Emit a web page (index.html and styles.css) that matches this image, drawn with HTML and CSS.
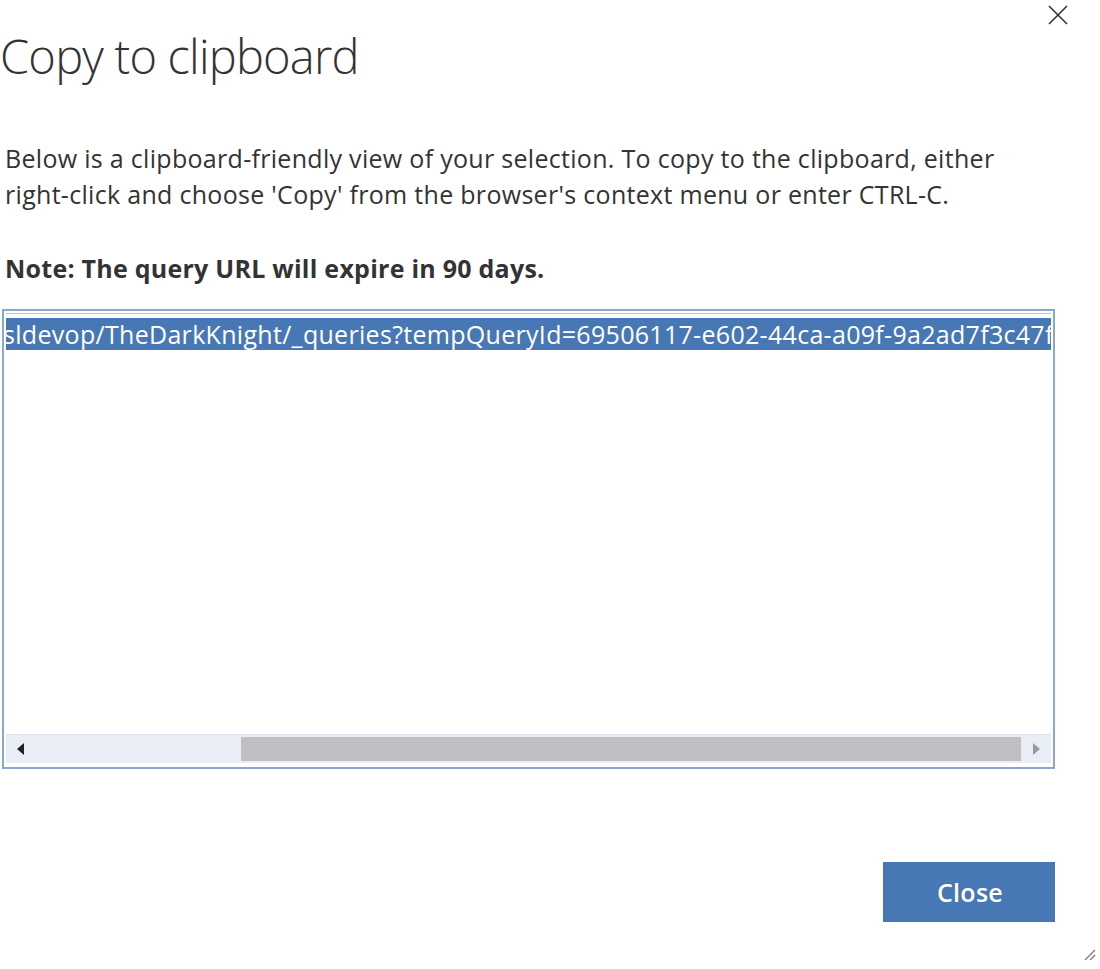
FILE: index.html
```html
<!DOCTYPE html>
<html>
<head>
<meta charset="utf-8">
<link rel="stylesheet" href="styles.css">
</head>
<body>
<div class="dialog">
  <div class="header">
    <h1 class="title">Copy to clipboard</h1>
    <span class="close-x">
      <svg width="22" height="22" viewBox="0 0 22 22"><path d="M2 2 L20 20 M20 2 L2 20" stroke="#333" stroke-width="1.6" fill="none"/></svg>
    </span>
  </div>
  <p class="desc">Below is a clipboard-friendly view of your selection. To copy to the clipboard, either right-click and choose 'Copy' from the browser's context menu or enter CTRL-C.</p>
  <p class="note">Note: The query URL will expire in 90 days.</p>
  <div class="textbox">
    <div class="content">
      <div class="line"><span class="url"><span class="sq">sldevop</span>/<span class="sq">TheDarkKnight</span>/_<span class="sq">queries</span>?<span class="sq">tempQueryId</span>=69506117-<span class="sq">e602</span>-<span class="sq">44ca</span>-<span class="sq">a09f</span>-<span class="sq">9a2ad7f3c47f</span></span></div>
    </div>
    <div class="hscroll">
      <div class="arrow left"><svg width="8" height="12" viewBox="0 0 8 12"><path d="M7 0 L0 6 L7 12 Z" fill="#222"/></svg></div>
      <div class="track"><div class="thumb"></div></div>
      <div class="arrow right"><svg width="8" height="12" viewBox="0 0 8 12"><path d="M1 0 L8 6 L1 12 Z" fill="#9a9aa6"/></svg></div>
    </div>
  </div>
  <div class="footer">
    <button class="btn">Close</button>
  </div>
  <span class="grip"><svg width="14" height="14" viewBox="0 0 14 14"><path d="M13 3 L3 13 M13 8 L8 13" stroke="#777" stroke-width="1.2"/></svg></span>
</div>
</body>
</html>
```
FILE: styles.css
```css
html, body {
  margin: 0;
  padding: 0;
  background: #fff;
}
body {
  font-family: "Open Sans", "Noto Sans", sans-serif;
  color: #333;
  width: 1100px;
  height: 969px;
  overflow: hidden;
}
.dialog {
  position: relative;
  width: 1100px;
  height: 969px;
  box-sizing: border-box;
  padding: 0 45px 0 2px;
}
.header {
  display: flex;
  justify-content: space-between;
  align-items: flex-start;
}
.title {
  margin: 26px 0 0 -2px;
  font-weight: 300;
  font-size: 47px;
  line-height: 60px;
  letter-spacing: -0.8px;
  color: #333;
}
.close-x {
  position: absolute;
  right: 31px;
  top: 4px;
}
.desc {
  margin: 54px 0 0 3px;
  font-size: 25px;
  line-height: 36px;
  letter-spacing: 0.3px;
  width: 1005px;
}
.note {
  margin: 38px 0 0 3px;
  font-size: 25px;
  line-height: 36px;
  font-weight: 700;
  letter-spacing: 0.25px;
}
.textbox {
  margin-top: 23px;
  width: 1053px;
  height: 460px;
  box-sizing: border-box;
  border: 2px solid #8aa6d3;
  padding: 2px;
  display: flex;
  flex-direction: column;
}
.content {
  flex: 1;
  overflow: hidden;
  border-top: 1px solid #b7c7e3;
  padding-top: 4px;
}
.line {
  background: #4877b5;
  height: 32px;
  white-space: nowrap;
  overflow: hidden;
}
.url {
  display: inline-block;
  margin-left: -3px;
  color: #fff;
  font-size: 25px;
  line-height: 32px;
  letter-spacing: 0.3px;
}
.sq {
  text-decoration: underline wavy #c0674a;
  text-decoration-thickness: 1.5px;
  text-underline-offset: 5px;
}
.hscroll {
  height: 28px;
  margin-bottom: 2px;
  display: flex;
  background: #e9eef6;
  border-top: 1px solid #dde5f1;
}
.arrow {
  width: 30px;
  display: flex;
  align-items: center;
  justify-content: center;
}
.arrow.left {
  width: 235px;
  justify-content: flex-start;
  padding-left: 11px;
  box-sizing: border-box;
}
.track {
  flex: 1;
  display: flex;
  align-items: stretch;
  padding: 2px 0;
}
.thumb {
  flex: 1;
  background: #c0c0c2;
}
.arrow.right {
  width: 30px;
}
.footer {
  display: flex;
  justify-content: flex-end;
  margin-top: 93px;
}
.btn {
  width: 172px;
  height: 60px;
  background: #4877b5;
  color: #fff;
  border: none;
  font-family: "Open Sans", "Noto Sans", sans-serif;
  font-weight: 600;
  font-size: 25px;
  letter-spacing: 0.3px;
  padding: 0 0 0 2px;
}
.grip {
  position: absolute;
  right: 4px;
  bottom: 3px;
}
```
